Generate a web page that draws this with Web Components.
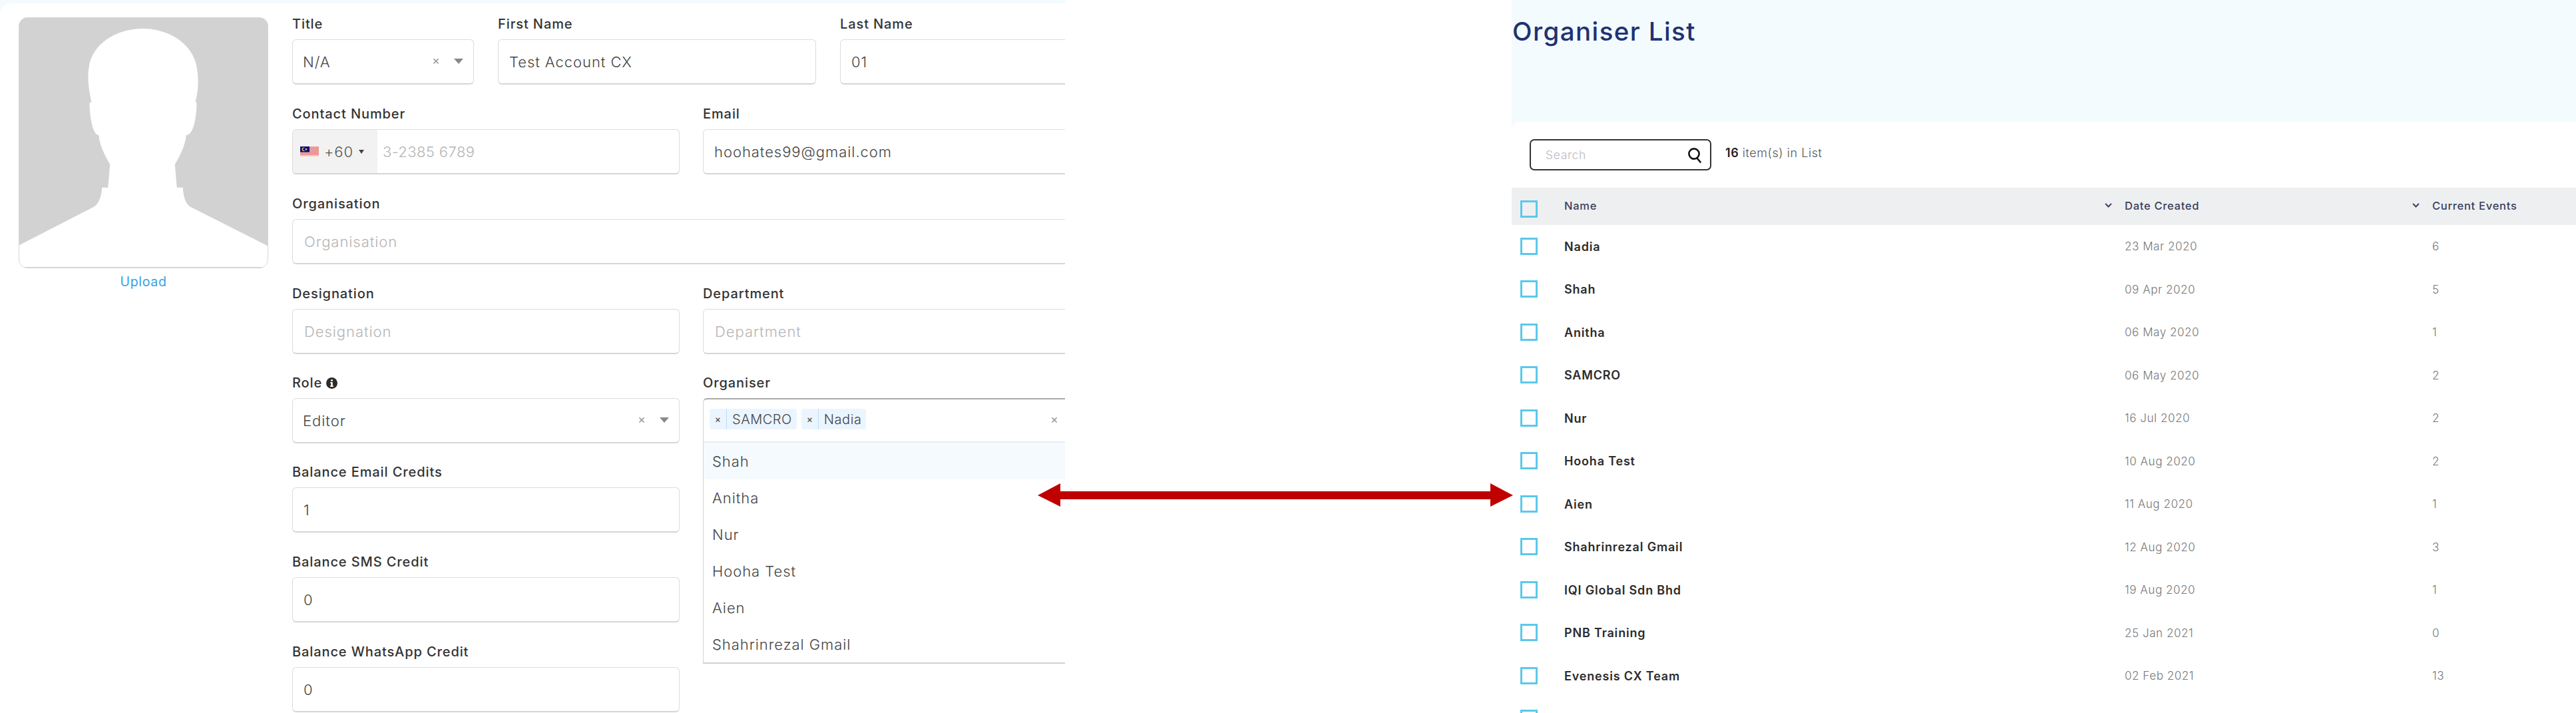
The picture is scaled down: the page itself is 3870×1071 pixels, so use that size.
<!DOCTYPE html>
<html>
<head>
<meta charset="utf-8">
<title>Organiser List</title>
<style>
    html, body { margin: 0; padding: 0; background: #fff; }
    body { font-family: Inter, "Open Sans", sans-serif; overflow: hidden; }
</style>
</head>
<body>
<compare-sheet>
    <profile-form slot="left">
        <form-row cols="273px 478px 376px" gap="36" next="32">
            <form-field label="Title"><select-box value="N/A"></select-box></form-field>
            <form-field label="First Name"><text-box value="Test Account CX"></text-box></form-field>
            <form-field label="Last Name"><text-box value="01"></text-box></form-field>
        </form-row>
        <form-row cols="582px 582px" gap="35" next="32">
            <form-field label="Contact Number"><phone-box placeholder="3-2385 6789"></phone-box></form-field>
            <form-field label="Email"><text-box value="hoohates99@gmail.com"></text-box></form-field>
        </form-row>
        <form-row cols="1199px" next="32">
            <form-field label="Organisation"><text-box placeholder="Organisation"></text-box></form-field>
        </form-row>
        <form-row cols="582px 582px" gap="35" next="31">
            <form-field label="Designation"><text-box placeholder="Designation"></text-box></form-field>
            <form-field label="Department"><text-box placeholder="Department"></text-box></form-field>
        </form-row>
        <form-row cols="582px 582px" gap="35" next="31">
            <div>
                <form-field label="Role" info><select-box value="Editor"></select-box></form-field>
                <form-field label="Balance Email Credits" next="31"><text-box value="1"></text-box></form-field>
                <form-field label="Balance SMS Credit" next="32"><text-box value="0"></text-box></form-field>
                <form-field label="Balance WhatsApp Credit" next="32"><text-box value="0"></text-box></form-field>
            </div>
            <form-field label="Organiser">
                <multi-select>
                    <tag-chip>SAMCRO</tag-chip>
                    <tag-chip>Nadia</tag-chip>
                    <option-row slot="options" active>Shah</option-row>
                    <option-row slot="options">Anitha</option-row>
                    <option-row slot="options">Nur</option-row>
                    <option-row slot="options">Hooha Test</option-row>
                    <option-row slot="options">Aien</option-row>
                    <option-row slot="options">Shahrinrezal Gmail</option-row>
                </multi-select>
            </form-field>
        </form-row>
    </profile-form>
    <organiser-list slot="right"></organiser-list>
</compare-sheet>

<script>
const sheetTemplate = document.createElement('template');
sheetTemplate.innerHTML = /*html*/`
    <style>
        :host { display: flex; position: relative; width: 3870px; height: 1071px; overflow: hidden; background: #fff; }
        .left { width: 1600px; height: 1071px; overflow: hidden; flex: none; }
        .right { width: 1599px; height: 1071px; overflow: hidden; flex: none; margin-left: 671px; }
        svg { position: absolute; left: 1559px; top: 726px; }
    </style>
    <div class="left"><slot name="left"></slot></div>
    <div class="right"><slot name="right"></slot></div>
    <svg width="714" height="36" viewBox="0 0 714 36">
        <path d="M0 18 L34 0 L34 12 L680 12 L680 0 L714 18 L680 35 L680 24 L34 24 L34 35 Z" fill="#c00000"/>
    </svg>
`;
class CompareSheet extends HTMLElement {
    constructor() {
        super();
        this.attachShadow({ mode: 'open' }).appendChild(sheetTemplate.content.cloneNode(true));
    }
}
customElements.define('compare-sheet', CompareSheet);

const formTemplate = document.createElement('template');
formTemplate.innerHTML = /*html*/`
    <style>
        :host { display: block; background: #f3fbff; padding-top: 5px; height: 1066px; color: #333; font-family: Inter, sans-serif; }
        .card { display: flex; background: #fff; border-top-left-radius: 16px; height: 100%; width: 1700px; box-sizing: border-box; padding: 21px 0 0 28px; }
        .photo { width: 375px; flex: none; margin-right: 36px; }
        .pic { display: block; width: 373px; height: 375px; border: 1px solid #d8d8d8; border-radius: 13px; background: #d2d2d2; overflow: hidden; }
        svg { display: block; width: 100%; height: 100%; }
        .upload { margin-top: 8px; text-align: center; color: #3b9fe2; font-size: 19.5px; line-height: 24px; letter-spacing: .7px; }
        .fields { flex: none; margin-top: -2px; }
    </style>
    <div class="card">
        <div class="photo">
            <div class="pic">
                <svg viewBox="0 0 375 375">
                    <path fill="#fff" d="M0 342 L113 284 C121 278 124 268 125 255 L134 255 L137 220 C128 205 121 190 120 176 C112 176 107 155 106 129 Q106 126 109 126 C104 105 103 85 105 75 C108 40 145 15 186 15 C228 15 266 40 269 80 C271 95 270 110 266 126 Q268 126 268 129 C267 155 262 176 252 176 C251 190 244 205 235 220 L238 255 L247 255 C248 268 250 278 258 284 L375 343 L375 375 L0 375 Z"/>
                </svg>
            </div>
            <div class="upload">Upload</div>
        </div>
        <div class="fields"><slot></slot></div>
    </div>
`;
class ProfileForm extends HTMLElement {
    constructor() {
        super();
        this.attachShadow({ mode: 'open' }).appendChild(formTemplate.content.cloneNode(true));
    }
}
customElements.define('profile-form', ProfileForm);

class FormRow extends HTMLElement {
    constructor() {
        super();
        this.attachShadow({ mode: 'open' }).innerHTML = `
            <style>
                :host { display: grid; grid-template-columns: ${this.getAttribute('cols')}; column-gap: ${this.getAttribute('gap') || 0}px; align-items: start; margin-bottom: ${this.getAttribute('next') || 32}px; }
            </style>
            <slot></slot>
        `;
    }
}
customElements.define('form-row', FormRow);

class FormField extends HTMLElement {
    constructor() {
        super();
        const info = this.hasAttribute('info') ? `
            <svg width="17" height="17" viewBox="0 0 17 17">
                <circle cx="8.5" cy="8.5" r="8.5" fill="#2b2b2b"/>
                <path d="M7 3.2h3v2.4H7zM6.2 7h3.6v5.2h1.1v1.8H6.1v-1.8h1.1V8.8h-1z" fill="#fff"/>
            </svg>` : '';
        this.attachShadow({ mode: 'open' }).innerHTML = `
            <style>
                :host { display: block; margin-top: ${this.getAttribute('next') || 0}px; }
                .lab { display: flex; align-items: center; gap: 6px; height: 24px; margin-bottom: 11px; font-size: 20px; font-weight: 500; letter-spacing: .9px; color: #333; white-space: nowrap; }
            </style>
            <div class="lab">${this.getAttribute('label')}${info}</div>
            <slot></slot>
        `;
    }
}
customElements.define('form-field', FormField);

const BOX_STYLE = `
    box-sizing: border-box; height: 68px; border: 1px solid #dcdcdc; border-bottom: 2px solid #d6d6d6;
    border-radius: 6px; background: #fff; display: flex; align-items: center;
    font-size: 22px; letter-spacing: .95px; font-weight: 300; color: #444; white-space: nowrap;
`;

class TextBox extends HTMLElement {
    constructor() {
        super();
        const value = this.getAttribute('value');
        const text = value || this.getAttribute('placeholder');
        this.attachShadow({ mode: 'open' }).innerHTML = `
            <style>
                :host { ${BOX_STYLE} padding-left: ${value ? 16 : 17}px; }
                .ph { color: #b5b5b5; }
            </style>
            <span class="${value ? '' : 'ph'}">${text}</span>
        `;
    }
}
customElements.define('text-box', TextBox);

class SelectBox extends HTMLElement {
    constructor() {
        super();
        this.attachShadow({ mode: 'open' }).innerHTML = `
            <style>
                :host { ${BOX_STYLE} padding: 0 15px 0 15px; }
                span { flex: 1; }
                i { font-style: normal; color: #999; font-size: 18px; letter-spacing: 0; margin-right: 21px; margin-top: -4px; font-weight: 400; }
                b { width: 0; height: 0; border-left: 7px solid transparent; border-right: 7px solid transparent; border-top: 8px solid #888; margin-top: -2px; }
            </style>
            <span>${this.getAttribute('value')}</span><i>×</i><b></b>
        `;
    }
}
customElements.define('select-box', SelectBox);

class PhoneBox extends HTMLElement {
    constructor() {
        super();
        this.attachShadow({ mode: 'open' }).innerHTML = `
            <style>
                :host { ${BOX_STYLE} overflow: hidden; }
                .dial { display: flex; align-items: center; width: 127px; height: 100%; box-sizing: border-box; padding-left: 11px; background: #f2f2f2; color: #555; flex: none; }
                .code { margin-left: 8px; }
                b { width: 0; height: 0; border-left: 4px solid transparent; border-right: 4px solid transparent; border-top: 6px solid #444; margin-left: 8px; }
                .ph { margin-left: 8px; color: #b5b5b5; letter-spacing: .4px; }
                svg { display: block; }
            </style>
            <div class="dial">
                <svg width="28" height="15" viewBox="0 0 28 15">
                    <rect width="28" height="15" fill="#e89a9a"/>
                    <rect y="13" width="28" height="2" fill="#f3c9c9"/>
                    <rect width="14" height="8.5" fill="#0a0a7a"/>
                    <circle cx="5.5" cy="4.2" r="2.8" fill="#f4d03f"/>
                    <circle cx="6.5" cy="4.2" r="2.3" fill="#0a0a7a"/>
                    <circle cx="9" cy="4.2" r="1.3" fill="#f4d03f"/>
                </svg>
                <span class="code">+60</span><b></b>
            </div>
            <span class="ph">${this.getAttribute('placeholder')}</span>
        `;
    }
}
customElements.define('phone-box', PhoneBox);

const multiTemplate = document.createElement('template');
multiTemplate.innerHTML = /*html*/`
    <style>
        :host { display: block; height: 399px; box-sizing: border-box; background: #fff; border: 1px solid #d4d4d4; border-top: 2px solid #aaa; border-bottom: 2px solid #d0d0d0; border-radius: 6px 6px 0 0; }
        .head { position: relative; display: flex; align-items: center; gap: 7px; height: 65px; box-sizing: border-box; padding: 0 0 4px 9px; border-bottom: 2px solid #e6ecf0; }
        i { font-style: normal; font-size: 18px; color: #999; position: absolute; left: 521px; }
    </style>
    <div class="head"><slot></slot><i>×</i></div>
    <slot name="options"></slot>
`;
class MultiSelect extends HTMLElement {
    constructor() {
        super();
        this.attachShadow({ mode: 'open' }).appendChild(multiTemplate.content.cloneNode(true));
    }
}
customElements.define('multi-select', MultiSelect);

const chipTemplate = document.createElement('template');
chipTemplate.innerHTML = /*html*/`
    <style>
        :host { display: flex; align-items: center; height: 31px; background: #ebf5ff; border-radius: 4px; font-size: 20px; font-weight: 300; letter-spacing: .55px; color: #444; }
        i { font-style: normal; font-weight: 500; width: 25px; text-align: center; font-size: 14px; letter-spacing: 0; color: #555; border-right: 1px solid #bfdcf5; height: 100%; line-height: 31px; }
        span { padding: 0 7px 0 8px; }
    </style>
    <i>×</i><span><slot></slot></span>
`;
class TagChip extends HTMLElement {
    constructor() {
        super();
        this.attachShadow({ mode: 'open' }).appendChild(chipTemplate.content.cloneNode(true));
    }
}
customElements.define('tag-chip', TagChip);

class OptionRow extends HTMLElement {
    constructor() {
        super();
        this.attachShadow({ mode: 'open' }).innerHTML = `
            <style>
                :host { display: flex; align-items: center; height: 55px; padding-left: 13px; font-size: 22px; font-weight: 300; letter-spacing: .95px; color: #444; background: ${this.hasAttribute('active') ? '#f5faff' : '#fff'}; }
            </style>
            <slot></slot>
        `;
    }
}
customElements.define('option-row', OptionRow);

const ORGANISERS = [
    ['Nadia', '23 Mar 2020', '6'],
    ['Shah', '09 Apr 2020', '5'],
    ['Anitha', '06 May 2020', '1'],
    ['SAMCRO', '06 May 2020', '2'],
    ['Nur', '16 Jul 2020', '2'],
    ['Hooha Test', '10 Aug 2020', '2'],
    ['Aien', '11 Aug 2020', '1'],
    ['Shahrinrezal Gmail', '12 Aug 2020', '3'],
    ['IQI Global Sdn Bhd', '19 Aug 2020', '1'],
    ['PNB Training', '25 Jan 2021', '0'],
    ['Evenesis CX Team', '02 Feb 2021', '13'],
    ['', '', '']
];

const listTemplate = document.createElement('template');
listTemplate.innerHTML = /*html*/`
    <style>
        :host { display: block; background: #f3fbff; height: 1071px; font-family: Inter, sans-serif; }
        h1 { margin: 0; height: 183px; box-sizing: border-box; padding: 23px 0 0 1px; font-size: 38.5px; line-height: 48px; font-weight: 500; letter-spacing: 1.4px; color: #1f3272; }
        .card { background: #fff; border-top-left-radius: 12px; height: 888px; }
        .tools { display: flex; align-items: center; padding: 26px 0 26px 27px; }
        .search { box-sizing: border-box; display: flex; align-items: center; justify-content: space-between; width: 273px; height: 47px; padding: 0 12px 0 22px; border: 2px solid #333; border-radius: 7px; color: #bbb; font-size: 17.5px; font-weight: 300; letter-spacing: .65px; }
        .count { margin: -6px 0 0 21px; font-size: 18px; font-weight: 300; color: #555; letter-spacing: .55px; }
        .count b { font-weight: 600; color: #222; }
        .grid { display: grid; grid-template-columns: 79px 842px 462px 216px; }
        .head { height: 56px; background: #eeeff1; align-items: center; color: #3a3f5c; font-size: 16.5px; font-weight: 500; letter-spacing: .72px; margin-bottom: 0; }
        .head > div { display: flex; align-items: center; justify-content: space-between; padding-right: 18px; margin-top: -2px; }
        .row { height: 64.5px; align-items: center; font-size: 17px; font-weight: 300; letter-spacing: .55px; color: #777; }
        .row .name { font-weight: 600; color: #2b2b2b; font-size: 18px; letter-spacing: .82px; }
        .box { box-sizing: border-box; display: block; width: 26px; height: 26px; margin-left: 13px; border: 3px solid #5cc8ea; }
        .row .box { background: #fff; margin-top: -1px; }
        .head .box { margin-top: 8px; }
        svg { display: block; }
    </style>
    <h1>Organiser List</h1>
    <div class="card">
        <div class="tools">
            <div class="search">
                <span>Search</span>
                <svg width="22" height="24" viewBox="0 0 22 24" fill="none" stroke="#111" stroke-width="2.6">
                    <circle cx="10" cy="10" r="7.6"/>
                    <path d="M14.5 16.5 L19.5 22.5" stroke-linecap="round"/>
                </svg>
            </div>
            <div class="count"><b>16</b> item(s) in List</div>
        </div>
        <div class="grid head">
            <div style="padding:0;margin:0"><span class="box"></span></div>
            <div>Name<sort-mark></sort-mark></div>
            <div>Date Created<sort-mark></sort-mark></div>
            <div>Current Events</div>
        </div>
        <div id="rows"></div>
    </div>
`;
class SortMark extends HTMLElement {
    constructor() {
        super();
        this.attachShadow({ mode: 'open' }).innerHTML = `
            <style>:host { display: block; width: 12px; height: 8px; }</style>
            <svg width="11" height="7" viewBox="0 0 12 8" style="display:block" fill="none" stroke="#3a3f5c" stroke-width="2.4"><path d="M1 1 L6 6.2 L11 1"/></svg>
        `;
    }
}
customElements.define('sort-mark', SortMark);

class OrganiserList extends HTMLElement {
    constructor() {
        super();
        this._shadow = this.attachShadow({ mode: 'open' });
        this._shadow.appendChild(listTemplate.content.cloneNode(true));
    }

    connectedCallback() {
        const rows = this._shadow.querySelector('#rows');
        rows.innerHTML = ORGANISERS.map(([name, date, events]) => `
            <div class="grid row">
                <div><span class="box"></span></div>
                <div class="name">${name}</div>
                <div>${date}</div>
                <div>${events}</div>
            </div>
        `).join('');
    }
}
customElements.define('organiser-list', OrganiserList);
</script>
</body>
</html>
